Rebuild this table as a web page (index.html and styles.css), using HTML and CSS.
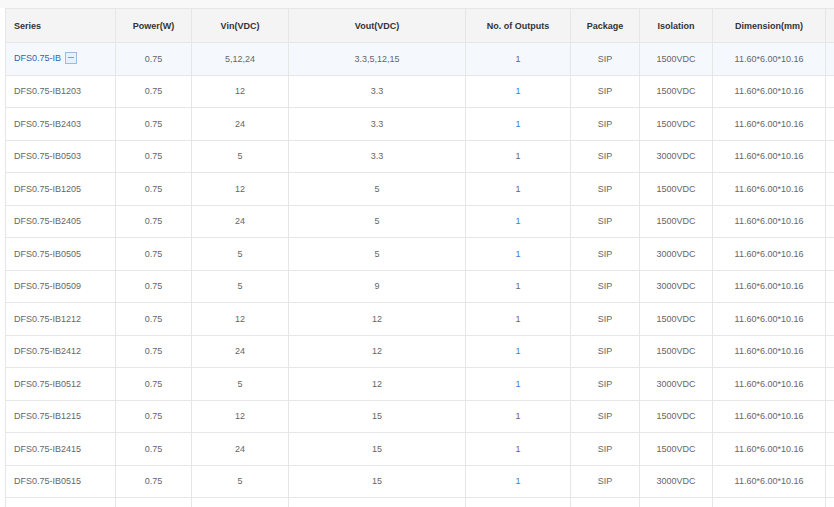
FILE: index.html
```html
<!DOCTYPE html>
<html>
<head>
<meta charset="utf-8">
<link rel="stylesheet" href="styles.css">
</head>
<body>
<div class="topbar"></div>
<div class="wrap">
<table class="spec">
<colgroup>
<col class="c1"><col class="c2"><col class="c3"><col class="c4"><col class="c5"><col class="c6"><col class="c7"><col class="c8"><col class="c9">
</colgroup>
<thead>
<tr><th class="left">Series</th><th>Power(W)</th><th>Vin(VDC)</th><th>Vout(VDC)</th><th>No. of Outputs</th><th>Package</th><th>Isolation</th><th>Dimension(mm)</th><th></th></tr>
</thead>
<tbody>
<tr class="parent"><td class="left"><span class="link">DFS0.75-IB</span><span class="toggle"><span class="dash"></span></span></td><td>0.75</td><td>5,12,24</td><td>3.3,5,12,15</td><td>1</td><td>SIP</td><td>1500VDC</td><td>11.60*6.00*10.16</td><td></td></tr>
<tr><td class="left">DFS0.75-IB1203</td><td>0.75</td><td>12</td><td>3.3</td><td class="blue">1</td><td>SIP</td><td>1500VDC</td><td>11.60*6.00*10.16</td><td></td></tr>
<tr><td class="left">DFS0.75-IB2403</td><td>0.75</td><td>24</td><td>3.3</td><td class="blue">1</td><td>SIP</td><td>1500VDC</td><td>11.60*6.00*10.16</td><td></td></tr>
<tr><td class="left">DFS0.75-IB0503</td><td>0.75</td><td>5</td><td>3.3</td><td>1</td><td>SIP</td><td>3000VDC</td><td>11.60*6.00*10.16</td><td></td></tr>
<tr><td class="left">DFS0.75-IB1205</td><td>0.75</td><td>12</td><td>5</td><td>1</td><td>SIP</td><td>1500VDC</td><td>11.60*6.00*10.16</td><td></td></tr>
<tr><td class="left">DFS0.75-IB2405</td><td>0.75</td><td>24</td><td>5</td><td class="blue">1</td><td>SIP</td><td>1500VDC</td><td>11.60*6.00*10.16</td><td></td></tr>
<tr><td class="left">DFS0.75-IB0505</td><td>0.75</td><td>5</td><td>5</td><td class="blue">1</td><td>SIP</td><td>3000VDC</td><td>11.60*6.00*10.16</td><td></td></tr>
<tr><td class="left">DFS0.75-IB0509</td><td>0.75</td><td>5</td><td>9</td><td>1</td><td>SIP</td><td>3000VDC</td><td>11.60*6.00*10.16</td><td></td></tr>
<tr><td class="left">DFS0.75-IB1212</td><td>0.75</td><td>12</td><td>12</td><td>1</td><td>SIP</td><td>1500VDC</td><td>11.60*6.00*10.16</td><td></td></tr>
<tr><td class="left">DFS0.75-IB2412</td><td>0.75</td><td>24</td><td>12</td><td class="blue">1</td><td>SIP</td><td>1500VDC</td><td>11.60*6.00*10.16</td><td></td></tr>
<tr><td class="left">DFS0.75-IB0512</td><td>0.75</td><td>5</td><td>12</td><td class="blue">1</td><td>SIP</td><td>3000VDC</td><td>11.60*6.00*10.16</td><td></td></tr>
<tr><td class="left">DFS0.75-IB1215</td><td>0.75</td><td>12</td><td>15</td><td>1</td><td>SIP</td><td>1500VDC</td><td>11.60*6.00*10.16</td><td></td></tr>
<tr><td class="left">DFS0.75-IB2415</td><td>0.75</td><td>24</td><td>15</td><td>1</td><td>SIP</td><td>1500VDC</td><td>11.60*6.00*10.16</td><td></td></tr>
<tr><td class="left">DFS0.75-IB0515</td><td>0.75</td><td>5</td><td>15</td><td class="blue">1</td><td>SIP</td><td>3000VDC</td><td>11.60*6.00*10.16</td><td></td></tr>
<tr><td></td><td></td><td></td><td></td><td></td><td></td><td></td><td></td><td></td></tr>
</tbody>
</table>
</div>
</body>
</html>
```
FILE: styles.css
```css
html, body {
  margin: 0;
  padding: 0;
  background: #ffffff;
  overflow: hidden;
  width: 834px;
  height: 507px;
}
body {
  font-family: "Liberation Sans", Arial, sans-serif;
  font-size: 9px;
  color: #666666;
}
.topbar {
  height: 8px;
  background: #f8f8f8;
}
.wrap {
  padding-left: 5px;
}
.spec {
  border-collapse: collapse;
  table-layout: fixed;
  width: 930px;
}
.c1 { width: 110px; }
.c2 { width: 76px; }
.c3 { width: 97px; }
.c4 { width: 177px; }
.c5 { width: 105px; }
.c6 { width: 69px; }
.c7 { width: 73px; }
.c8 { width: 113px; }
.c9 { width: 110px; }
.spec th, .spec td {
  border: 1px solid #e6e6e6;
  text-align: center;
  padding: 0 8px;
  white-space: nowrap;
}
.spec th {
  height: 33px;
  background: #f4f4f4;
  color: #333333;
  font-weight: bold;
}
.spec td {
  height: 31.5px;
}
.spec .left {
  text-align: left;
}
.parent td {
  background: #f5f9fe;
}
.link {
  color: #2b65b5;
}
.blue {
  color: #3a7fd5;
}
.toggle {
  display: inline-block;
  vertical-align: middle;
  position: relative;
  top: -1px;
  width: 10px;
  height: 10px;
  margin-left: 4px;
  border: 1px solid #9dbbe2;
  background: #e9f0f9;
}
.dash {
  position: absolute;
  left: 2px;
  right: 2px;
  top: 4.5px;
  height: 1px;
  background: #7f9cc3;
}
```
